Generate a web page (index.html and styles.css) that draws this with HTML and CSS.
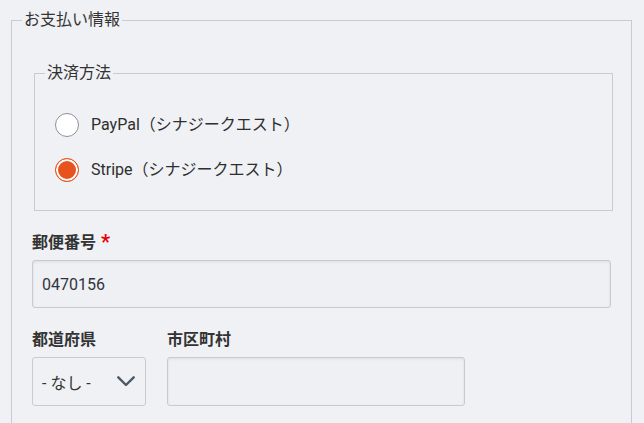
FILE: index.html
```html
<!DOCTYPE html>
<html lang="ja">
<head>
<meta charset="utf-8">
<title>お支払い情報</title>
<link rel="stylesheet" href="styles.css">
</head>
<body>
<form class="page">
  <fieldset class="group">
    <legend class="group-legend">お支払い情報</legend>
    <div class="group-body">
      <fieldset class="group group-inner">
        <legend class="group-legend">決済方法</legend>
        <div class="group-body radios">
          <label class="radio-row">
            <input class="radio" type="radio" name="pay" value="paypal">
            <span class="radio-text">PayPal（シナジークエスト）</span>
          </label>
          <label class="radio-row">
            <input class="radio" type="radio" name="pay" value="stripe" checked>
            <span class="radio-text">Stripe（シナジークエスト）</span>
          </label>
        </div>
      </fieldset>

      <div class="field field-postal">
        <label class="field-label" for="zip">郵便番号<span class="required">*</span></label>
        <input class="text-input" id="zip" type="text" value="0470156">
      </div>

      <div class="field-row">
        <div class="field">
          <label class="field-label" for="pref">都道府県</label>
          <div class="select">
            <span class="select-value">- なし -</span>
            <svg class="select-chevron" width="18" height="11" viewBox="0 0 18 11" aria-hidden="true">
              <polyline points="1.3,1.3 9,9 16.7,1.3" fill="none" stroke="#4c5a66" stroke-width="2.4" stroke-linecap="round" stroke-linejoin="round"/>
            </svg>
          </div>
        </div>
        <div class="field">
          <label class="field-label" for="city">市区町村</label>
          <input class="text-input city-input" id="city" type="text" value="">
        </div>
      </div>
    </div>
  </fieldset>
</form>
</body>
</html>
```

FILE: styles.css
```css
html, body {
  margin: 0;
  padding: 0;
  background: #f0f1f5;
}

body {
  font-family: Roboto, "Noto Sans CJK JP", sans-serif;
  font-size: 16px;
  color: #333333;
  height: 423px;
  overflow: hidden;
}

.page {
  padding: 8px 12px 0 11px;
}

.group {
  margin: 0;
  padding: 0 20px 40px 10px;
  border: 1px solid #c9cad4;
  min-width: 0;
}

.group-legend {
  padding: 0 2px;
  font-size: 16px;
  line-height: 24px;
  color: #333333;
}

.group-body {
  padding-left: 10px;
}

.group > .group-body {
  padding-top: 29px;
}

.group-inner {
  margin: 0 -2px 0 2px;
  padding: 0 10px 28px 10px;
}

.group-inner > .group-body {
  padding-top: 28px;
}

.radios {
  display: flex;
  flex-direction: column;
  gap: 21px;
}

.radio-row {
  display: flex;
  align-items: center;
  gap: 12px;
  height: 24px;
  cursor: pointer;
}

.radio {
  appearance: none;
  -webkit-appearance: none;
  margin: 0;
  width: 24px;
  height: 24px;
  border-radius: 50%;
  border: 1px solid #8d8e9c;
  background: #ffffff;
  flex: none;
}

.radio:checked {
  border: 1.5px solid #e8521e;
  background: #e8521e;
  box-shadow: inset 0 0 0 2px #ffffff;
}

.radio-text {
  font-size: 16px;
  line-height: 24px;
  color: #2e2e2e;
}

.field-postal {
  margin-top: 20px;
}

.field-label {
  display: block;
  font-weight: 700;
  font-size: 16px;
  line-height: 24px;
  margin-bottom: 5px;
  color: #333333;
}

.required {
  color: #e60000;
  font-size: 20px;
  margin-left: 5px;
  vertical-align: top;
  line-height: 22px;
}

.text-input {
  box-sizing: border-box;
  display: block;
  width: 100%;
  height: 48px;
  margin: 0;
  padding: 0 9px;
  border: 1px solid #c7c9d3;
  border-radius: 3px;
  background: #eff0f4;
  box-shadow: inset 0 1px 3px rgba(0, 0, 0, 0.08);
  font-family: Roboto, "Noto Sans CJK JP", sans-serif;
  font-size: 16px;
  color: #2f3540;
}

.field-row {
  display: flex;
  gap: 21px;
  margin-top: 20px;
}

.select {
  box-sizing: border-box;
  width: 114px;
  height: 49px;
  display: flex;
  align-items: center;
  justify-content: space-between;
  padding: 0 10px 0 9px;
  border: 1px solid #c9cad4;
  border-radius: 3px;
  background: #f0f1f5;
  color: #333333;
}

.select-value {
  font-size: 16px;
}

.select-chevron {
  display: block;
}

.city-input {
  width: 298px;
  height: 49px;
}
```
